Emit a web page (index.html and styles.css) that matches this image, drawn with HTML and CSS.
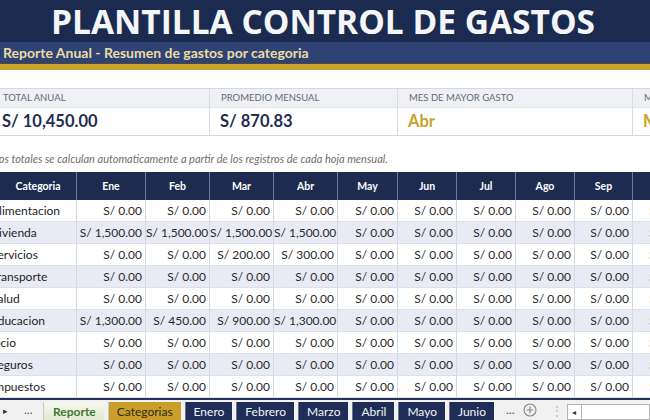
FILE: index.html
```html
<!DOCTYPE html>
<html lang="es">
<head>
<meta charset="utf-8">
<title>Plantilla Control de Gastos</title>
<link rel="stylesheet" href="styles.css">
</head>
<body>
<div class="page">
  <header class="title">PLANTILLA CONTROL DE GASTOS</header>
  <div class="subtitle">Reporte Anual - Resumen de gastos por categoria</div>

  <main class="sheet">
    <section class="cards">
      <div class="card">
        <div class="card-label">TOTAL ANUAL</div>
        <div class="card-value">S/ 10,450.00</div>
      </div>
      <div class="card">
        <div class="card-label">PROMEDIO MENSUAL</div>
        <div class="card-value">S/ 870.83</div>
      </div>
      <div class="card">
        <div class="card-label">MES DE MAYOR GASTO</div>
        <div class="card-value gold">Abr</div>
      </div>
      <div class="card">
        <div class="card-label">MES DE MENOR GASTO</div>
        <div class="card-value gold">May</div>
      </div>
    </section>

    <p class="note">Los totales se calculan automaticamente a partir de los registros de cada hoja mensual.</p>

    <section class="table">
      <div class="row head">
        <div class="cell">Categoria</div>
        <div class="cell">Ene</div>
        <div class="cell">Feb</div>
        <div class="cell">Mar</div>
        <div class="cell">Abr</div>
        <div class="cell">May</div>
        <div class="cell">Jun</div>
        <div class="cell">Jul</div>
        <div class="cell">Ago</div>
        <div class="cell">Sep</div>
        <div class="cell">Oct</div>
      </div>
      <div class="row">
        <div class="cell cat">Alimentacion</div>
        <div class="cell">S/ 0.00</div><div class="cell">S/ 0.00</div><div class="cell">S/ 0.00</div><div class="cell">S/ 0.00</div>
        <div class="cell">S/ 0.00</div><div class="cell">S/ 0.00</div><div class="cell">S/ 0.00</div><div class="cell">S/ 0.00</div><div class="cell">S/ 0.00</div><div class="cell">S/ 0.00</div>
      </div>
      <div class="row alt">
        <div class="cell cat">Vivienda</div>
        <div class="cell">S/ 1,500.00</div><div class="cell">S/ 1,500.00</div><div class="cell">S/ 1,500.00</div><div class="cell">S/ 1,500.00</div>
        <div class="cell">S/ 0.00</div><div class="cell">S/ 0.00</div><div class="cell">S/ 0.00</div><div class="cell">S/ 0.00</div><div class="cell">S/ 0.00</div><div class="cell">S/ 0.00</div>
      </div>
      <div class="row">
        <div class="cell cat">Servicios</div>
        <div class="cell">S/ 0.00</div><div class="cell">S/ 0.00</div><div class="cell">S/ 200.00</div><div class="cell">S/ 300.00</div>
        <div class="cell">S/ 0.00</div><div class="cell">S/ 0.00</div><div class="cell">S/ 0.00</div><div class="cell">S/ 0.00</div><div class="cell">S/ 0.00</div><div class="cell">S/ 0.00</div>
      </div>
      <div class="row alt">
        <div class="cell cat">Transporte</div>
        <div class="cell">S/ 0.00</div><div class="cell">S/ 0.00</div><div class="cell">S/ 0.00</div><div class="cell">S/ 0.00</div>
        <div class="cell">S/ 0.00</div><div class="cell">S/ 0.00</div><div class="cell">S/ 0.00</div><div class="cell">S/ 0.00</div><div class="cell">S/ 0.00</div><div class="cell">S/ 0.00</div>
      </div>
      <div class="row">
        <div class="cell cat">Salud</div>
        <div class="cell">S/ 0.00</div><div class="cell">S/ 0.00</div><div class="cell">S/ 0.00</div><div class="cell">S/ 0.00</div>
        <div class="cell">S/ 0.00</div><div class="cell">S/ 0.00</div><div class="cell">S/ 0.00</div><div class="cell">S/ 0.00</div><div class="cell">S/ 0.00</div><div class="cell">S/ 0.00</div>
      </div>
      <div class="row alt">
        <div class="cell cat">Educacion</div>
        <div class="cell">S/ 1,300.00</div><div class="cell">S/ 450.00</div><div class="cell">S/ 900.00</div><div class="cell">S/ 1,300.00</div>
        <div class="cell">S/ 0.00</div><div class="cell">S/ 0.00</div><div class="cell">S/ 0.00</div><div class="cell">S/ 0.00</div><div class="cell">S/ 0.00</div><div class="cell">S/ 0.00</div>
      </div>
      <div class="row">
        <div class="cell cat">Ocio</div>
        <div class="cell">S/ 0.00</div><div class="cell">S/ 0.00</div><div class="cell">S/ 0.00</div><div class="cell">S/ 0.00</div>
        <div class="cell">S/ 0.00</div><div class="cell">S/ 0.00</div><div class="cell">S/ 0.00</div><div class="cell">S/ 0.00</div><div class="cell">S/ 0.00</div><div class="cell">S/ 0.00</div>
      </div>
      <div class="row alt">
        <div class="cell cat">Seguros</div>
        <div class="cell">S/ 0.00</div><div class="cell">S/ 0.00</div><div class="cell">S/ 0.00</div><div class="cell">S/ 0.00</div>
        <div class="cell">S/ 0.00</div><div class="cell">S/ 0.00</div><div class="cell">S/ 0.00</div><div class="cell">S/ 0.00</div><div class="cell">S/ 0.00</div><div class="cell">S/ 0.00</div>
      </div>
      <div class="row">
        <div class="cell cat">Impuestos</div>
        <div class="cell">S/ 0.00</div><div class="cell">S/ 0.00</div><div class="cell">S/ 0.00</div><div class="cell">S/ 0.00</div>
        <div class="cell">S/ 0.00</div><div class="cell">S/ 0.00</div><div class="cell">S/ 0.00</div><div class="cell">S/ 0.00</div><div class="cell">S/ 0.00</div><div class="cell">S/ 0.00</div>
      </div>
    </section>
  </main>

  <footer class="tabs">
    <span class="nav-arrow">&#9656;</span>
    <span class="more">...</span>
    <span class="tab active">Reporte</span>
    <span class="tab gold-tab">Categorias</span>
    <span class="tab navy">Enero</span>
    <span class="tab navy">Febrero</span>
    <span class="tab navy">Marzo</span>
    <span class="tab navy">Abril</span>
    <span class="tab navy">Mayo</span>
    <span class="tab navy">Junio</span>
    <span class="more more-right">...</span>
    <span class="add">
      <svg width="14" height="14" viewBox="0 0 14 14"><circle cx="7" cy="7" r="6" fill="none" stroke="#8a8a8a" stroke-width="1.1"/><path d="M7 3.6v6.8M3.6 7h6.8" stroke="#8a8a8a" stroke-width="1.2"/></svg>
    </span>
    <span class="vdots">&#8942;</span>
    <span class="scroll">
      <span class="scroll-btn">&#9666;</span>
      <span class="scroll-track"></span>
    </span>
  </footer>
</div>
</body>
</html>
```

FILE: styles.css
```css
html, body {
  margin: 0;
  padding: 0;
}
body {
  width: 650px;
  height: 420px;
  overflow: hidden;
  background: #ffffff;
  font-family: Lato, "Open Sans", "Liberation Sans", sans-serif;
  color: #2b2b2b;
}
.page {
  width: 650px;
  height: 420px;
  overflow: hidden;
  display: flex;
  flex-direction: column;
}
.title {
  height: 42px;
  background: #1b2a4f;
  color: #f4f5f8;
  font-family: "Open Sans", "Liberation Sans", sans-serif;
  font-weight: 700;
  font-size: 33.5px;
  text-align: center;
  line-height: 42px;
  padding-right: 4px;
  flex: none;
  white-space: nowrap;
}
.subtitle {
  height: 22px;
  background: #2e4373;
  color: #eadca6;
  font-weight: 700;
  font-size: 14px;
  line-height: 22px;
  padding-left: 3px;
  border-bottom: 6px solid #cda32c;
  box-shadow: inset 0 -1px 0 #4b4a3e;
  flex: none;
  white-space: nowrap;
}
.sheet {
  margin-left: -8px;
  width: 740px;
  flex: none;
}
.cards {
  margin-top: 18px;
  display: grid;
  grid-template-columns: 218px 188px 235px 99px;
  border-top: 1px solid #d3d7df;
  border-bottom: 1px solid #d3d7df;
}
.card {
  border-right: 1px solid #d8dbe2;
  overflow: hidden;
  white-space: nowrap;
}
.card-label {
  height: 18px;
  line-height: 18px;
  background: #eef0f4;
  color: #666a72;
  font-size: 9.5px;
  padding-left: 11px;
  border-bottom: 1px solid #e2e5ea;
}
.card-value {
  height: 27px;
  line-height: 27px;
  font-size: 16.5px;
  font-weight: 700;
  color: #1f2d50;
  padding-left: 10px;
}
.card-value.gold {
  color: #c9a229;
}
.note {
  margin: 0;
  height: 36px;
  box-sizing: border-box;
  padding: 16px 0 0 2px;
  line-height: 14px;
  font-size: 11px;
  font-style: italic;
  color: #6f6f6f;
  white-space: nowrap;
}
.table {
  border-bottom: 2px solid #24325a;
}
.row {
  display: grid;
  grid-template-columns: 85px 69px 64px 64px 64px 60px 59px 59px 59px 58px 59px;
  height: 22px;
  box-sizing: border-box;
  border-bottom: 1px solid #dde0e7;
  background: #ffffff;
}
.row.alt {
  background: #e8ebf4;
}
.cell {
  font-size: 12px;
  line-height: 21px;
  text-align: right;
  padding-right: 3px;
  white-space: nowrap;
  overflow: hidden;
  border-right: 1px solid #d4d8e0;
  color: #2a2a2a;
}
.cell.cat {
  text-align: left;
  padding-left: 0;
  padding-right: 0;
  text-indent: -1px;
  color: #1e1e1e;
}
.row.head {
  height: 28px;
  background: #1e2b50;
  border-bottom: 0;
}
.row.head .cell {
  color: #ffffff;
  font-weight: 700;
  font-size: 10.5px;
  line-height: 28px;
  text-align: center;
  padding: 0;
  text-indent: 0;
  border-right: 1px solid #6d7894;
}
.row.head .cell:first-child {
  padding-left: 8px;
}
.tabs {
  flex: 1;
  display: flex;
  align-items: stretch;
  background: #f1f1f1;
  font-size: 12px;
  white-space: nowrap;
  padding-top: 2px;
}
.nav-arrow {
  font-size: 9px;
  color: #333;
  padding: 0 0 0 3px;
  line-height: 18px;
  width: 18px;
}
.more {
  color: #555;
  line-height: 16px;
  font-size: 12px;
  width: 22px;
  padding-left: 3px;
  box-sizing: border-box;
}
.tab {
  line-height: 19px;
  padding: 0 8px;
  margin-right: 4px;
  border-left: 1px solid #c9c9c9;
}
.tab.active {
  background: linear-gradient(#f6f8ee, #e1eacd);
  color: #3c7a2f;
  font-weight: 700;
  padding: 0 8px 0 9px;
}
.tab.gold-tab {
  background: #c99f2a;
  color: #2f2a1c;
  padding: 0 8px;
}
.tab.navy {
  background: #1f2e57;
  color: #f2f4f8;
  border-left: 1px solid #6a7290;
}
.more-right {
  margin-left: 5px;
  width: 20px;
}
.add {
  display: flex;
  align-items: center;
  padding-bottom: 3px;
  width: 28px;
}
.vdots {
  color: #bcbcbc;
  font-size: 12px;
  line-height: 18px;
  width: 16px;
}
.scroll {
  flex: 1;
  display: flex;
  align-items: flex-start;
  padding-top: 2px;
}
.scroll-btn {
  width: 13px;
  height: 14px;
  border: 1px solid #b5b5b5;
  background: #ffffff;
  font-size: 8px;
  line-height: 14px;
  text-align: center;
  color: #333;
}
.scroll-track {
  flex: 1;
  height: 14px;
  border: 1px solid #b5b5b5;
  border-left: 0;
  background: #ffffff;
}
```
